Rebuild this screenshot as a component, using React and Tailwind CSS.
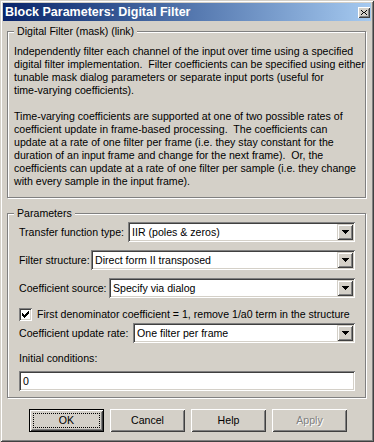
import React from "react";

// win2000 bevels
const frame =
  "shadow-[inset_1px_1px_0_#d4d0c8,inset_-1px_-1px_0_#404040,inset_2px_2px_0_#ffffff,inset_-2px_-2px_0_#808080]";
const raised =
  "shadow-[inset_1px_1px_0_#ffffff,inset_-1px_-1px_0_#404040,inset_2px_2px_0_#d4d0c8,inset_-2px_-2px_0_#808080]";
const arrowBevel =
  "shadow-[inset_1px_1px_0_#d4d0c8,inset_-1px_-1px_0_#404040,inset_2px_2px_0_#ffffff,inset_-2px_-2px_0_#808080]";
const sunken =
  "shadow-[inset_1px_1px_0_#808080,inset_-1px_-1px_0_#ffffff,inset_2px_2px_0_#404040,inset_-2px_-2px_0_#d4d0c8]";
const etched =
  "border border-[#808080] shadow-[inset_1px_1px_0_#ffffff,1px_1px_0_#ffffff]";

const intro = [
  "Independently filter each channel of the input over time using a specified",
  "digital filter implementation.  Filter coefficients can be specified using either",
  "tunable mask dialog parameters or separate input ports (useful for",
  "time-varying coefficients).",
];

const rates = [
  "Time-varying coefficients are supported at one of two possible rates of",
  "coefficient update in frame-based processing.  The coefficients can",
  "update at a rate of one filter per frame (i.e. they stay constant for the",
  "duration of an input frame and change for the next frame).  Or, the",
  "coefficients can update at a rate of one filter per sample (i.e. they change",
  "with every sample in the input frame).",
];

const GroupBox = ({ title, className, children }) => (
  <div className={`relative ${etched} ${className}`}>
    <span className="absolute left-[6px] -top-[7px] px-[3px] bg-[#d4d0c8] leading-[13px] whitespace-nowrap">
      {title}
    </span>
    {children}
  </div>
);

const Combo = ({ value }) => (
  <div
    className={`flex-1 h-[20px] bg-white flex items-center pl-[4px] pr-[2px] ${sunken}`}
  >
    <span className="flex-1 whitespace-nowrap">{value}</span>
    <div
      className={`w-[16px] h-[16px] bg-[#d4d0c8] flex items-center justify-center ${arrowBevel}`}
    >
      <svg width="7" height="4" shapeRendering="crispEdges">
        <path
          d="M0 0h7v1H0z M1 1h5v1H1z M2 2h3v1H2z M3 3h1v1H3z"
          fill="#000"
        />
      </svg>
    </div>
  </div>
);

const ComboRow = ({ label, labelWidth, value, className = "" }) => (
  <div className={`flex items-center h-[20px] ${className}`}>
    <span className={`${labelWidth} shrink-0 whitespace-nowrap`}>{label}</span>
    <Combo value={value} />
  </div>
);

const Button = ({ children, isDefault, disabled }) => {
  if (isDefault) {
    return (
      <div className="w-[75px] h-[23px] border border-black bg-[#d4d0c8] flex">
        <div className={`flex-1 flex p-[3px] ${raised}`}>
          <div className="flex-1 flex items-center justify-center border border-dotted border-black">
            {children}
          </div>
        </div>
      </div>
    );
  }
  return (
    <div
      className={`w-[75px] h-[23px] bg-[#d4d0c8] flex items-center justify-center ${raised} ${
        disabled ? "text-[#808080] [text-shadow:1px_1px_0_#ffffff]" : ""
      }`}
    >
      {children}
    </div>
  );
};

const App = () => {
  return (
    <div
      className={`w-[374px] h-[442px] bg-[#d4d0c8] p-[3px] flex flex-col text-[10.6px] leading-[13px] text-black font-['Liberation_Sans',Arial,sans-serif] ${frame}`}
    >
      {/* Title bar */}
      <div className="h-[18px] bg-linear-to-r from-[#0a246a] to-[#a6caf0] flex items-center pl-[2px]">
        <span className="flex-1 text-white font-bold text-[12.5px] whitespace-nowrap">
          Block Parameters: Digital Filter
        </span>
        <div
          className={`w-[12px] h-[11px] mr-[1px] bg-[#d4d0c8] flex items-center justify-center ${raised}`}
        >
          <svg width="6" height="5" shapeRendering="crispEdges">
            <path
              d="M0 0h1v1H0z M5 0h1v1H5z M1 1h1v1H1z M4 1h1v1H4z M2 2h2v1H2z M1 3h1v1H1z M4 3h1v1H4z M0 4h1v1H0z M5 4h1v1H5z"
              fill="#000"
            />
          </svg>
        </div>
      </div>

      <div className="flex flex-col pl-[4px] pr-[5px]">
        {/* Description */}
        <GroupBox
          title="Digital Filter (mask) (link)"
          className="mt-[10px] h-[167px] pt-[13px] pl-[6px]"
        >
          {intro.map((line, i) => (
            <div key={i} className="whitespace-pre">
              {line}
            </div>
          ))}
          <div className="h-[13px]" />
          {rates.map((line, i) => (
            <div key={i} className="whitespace-pre">
              {line}
            </div>
          ))}
        </GroupBox>

        {/* Parameters */}
        <GroupBox
          title="Parameters"
          className="mt-[15px] h-[185px] pt-[8px] pl-[11px] pr-[10px] flex flex-col"
        >
          <ComboRow
            label="Transfer function type:"
            labelWidth="w-[109px]"
            value="IIR (poles & zeros)"
          />
          <ComboRow
            label="Filter structure:"
            labelWidth="w-[72px]"
            value="Direct form II transposed"
            className="mt-[8px]"
          />
          <ComboRow
            label="Coefficient source:"
            labelWidth="w-[90px]"
            value="Specify via dialog"
            className="mt-[8px]"
          />
          <div className="flex items-center h-[13px] mt-[10px]">
            <div
              className={`w-[13px] h-[13px] bg-white flex items-center justify-center ${sunken}`}
            >
              <svg width="7" height="7" shapeRendering="crispEdges">
                <path
                  d="M6 0h1v1H6z M5 1h2v1H5z M0 2h1v1H0z M4 2h3v1H4z M0 3h2v1H0z M3 3h3v1H3z M0 4h5v1H0z M1 5h3v1H1z M2 6h1v1H2z"
                  fill="#000"
                />
              </svg>
            </div>
            <span className="ml-[5px] whitespace-nowrap">
              First denominator coefficient = 1, remove 1/a0 term in the
              structure
            </span>
          </div>
          <ComboRow
            label="Coefficient update rate:"
            labelWidth="w-[114px]"
            value="One filter per frame"
            className="mt-[2px]"
          />
          <div className="mt-[9px] h-[13px] whitespace-nowrap">
            Initial conditions:
          </div>
          <div
            className={`mt-[6px] h-[20px] bg-white flex items-center pl-[4px] ${sunken}`}
          >
            0
          </div>
        </GroupBox>
      </div>

      {/* Buttons */}
      <div className="flex gap-[6px] mt-[11px] pl-[26px]">
        <Button isDefault>OK</Button>
        <Button>Cancel</Button>
        <Button>Help</Button>
        <Button disabled>Apply</Button>
      </div>
    </div>
  );
};

export default App;
